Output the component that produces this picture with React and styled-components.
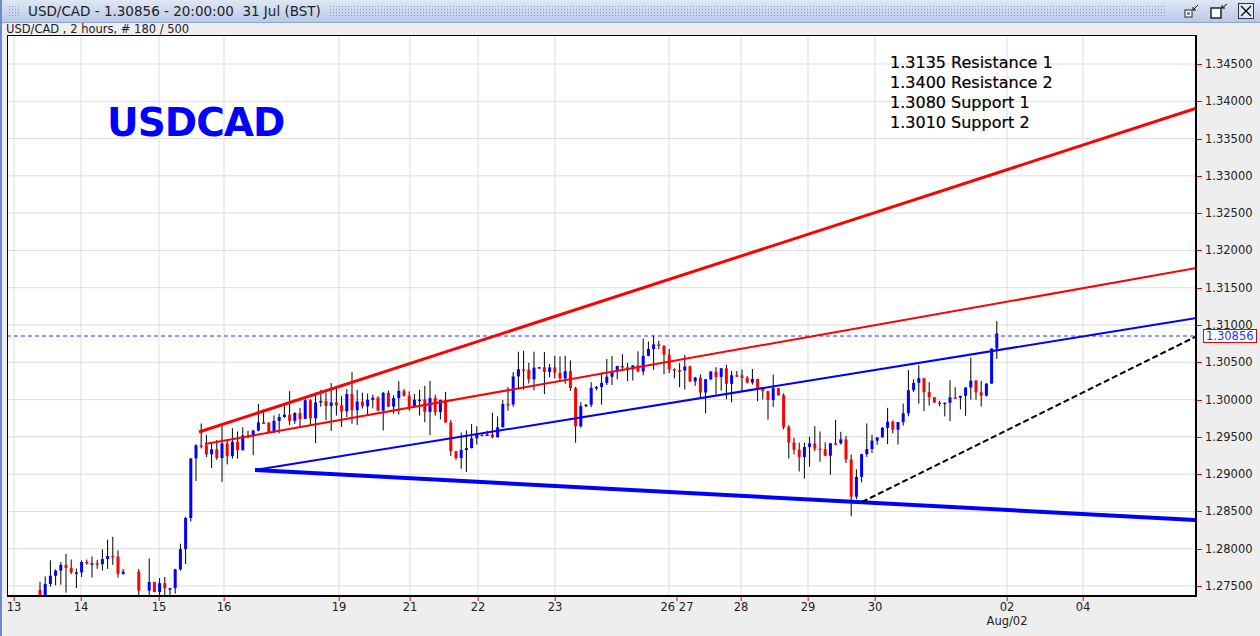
import React from 'react';
import styled, {createGlobalStyle} from 'styled-components';

const Global = createGlobalStyle`
  body { margin: 0; background: #eeeeee; font-family: "DejaVu Sans", sans-serif; }
`;

const PX = 7, PY = 35, PW = 1190, PH = 562;
const yOf = p => 64 + (1.345 - p) * 7457;

const Window = styled.div`
  width: 1260px;
  height: 636px;
  background: #eeeeee;
  border-left: 2px solid #6f8ac6;
  box-sizing: border-box;
  display: flex;
  flex-direction: column;
  overflow: hidden;
`;

const TitleBar = styled.div`
  height: 22px;
  display: flex;
  align-items: center;
  gap: 8px;
  padding: 0 6px 0 6px;
  background: linear-gradient(#dfe7f5, #b9c9e6);
  border-bottom: 1px solid #8ea3cf;
  font-size: 13.5px;
  color: #222;
`;

const Grip = styled.div`
  width: ${p => p.$w || '12px'};
  flex: ${p => p.$grow ? 1 : 'none'};
  height: 12px;
  background-image: radial-gradient(#8a9bbd 0.7px, transparent 0.8px);
  background-size: 3px 3px;
`;

const WinButtons = styled.div`
  display: flex;
  gap: 8px;
  align-items: center;
  margin-left: 10px;
`;

const InfoLine = styled.div`
  height: 12px;
  font-size: 11.5px;
  line-height: 12px;
  padding-left: 4px;
  color: #222;
`;

const ChartRow = styled.div`
  display: flex;
  height: ${PH}px;
  padding-left: 5px;
`;

const Plot = styled.div`
  position: relative;
  width: ${PW}px;
  height: ${PH}px;
  background: #fff;
  border: 1px solid #000;
  border-width: 1px 2px 2px 1px;
  box-sizing: border-box;
`;

const YAxis = styled.div`
  position: relative;
  flex: 1;
`;

const YLabel = styled.div`
  position: absolute;
  left: 8px;
  font-size: 11.5px;
  color: #222;
  transform: translateY(-50%);
  &::before {
    content: "";
    position: absolute;
    left: -8px;
    top: 50%;
    width: 5px;
    border-top: 1px solid #e00;
  }
`;

const PriceTag = styled.div`
  position: absolute;
  left: 6px;
  font-size: 11.5px;
  color: #2233ff;
  border: 1px solid #e00;
  background: #fff;
  padding: 0 2px;
  line-height: 12px;
  transform: translateY(-50%);
`;

const XAxis = styled.div`
  position: relative;
  height: 39px;
`;

const XLabel = styled.div`
  position: absolute;
  top: ${p => p.$row ? 17 : 3}px;
  font-size: 11.5px;
  color: #222;
  transform: translateX(-50%);
  &::before {
    content: "";
    display: ${p => p.$row ? 'none' : 'block'};
    position: absolute;
    left: 50%;
    top: -3px;
    height: 4px;
    border-left: 1px solid #e00;
  }
`;

const Title = styled.div`
  position: absolute;
  left: ${106 - PX}px;
  top: ${99 - PY}px;
  font: bold 39px "DejaVu Sans", sans-serif;
  letter-spacing: -1px;
  color: #0000ff;
`;

const Notes = styled.div`
  position: absolute;
  left: ${889 - PX}px;
  top: ${52 - PY}px;
  font-size: 16px;
  line-height: 20px;
  color: #000;
  -webkit-text-stroke: 0.2px #000;
`;

// price path anchors (x, close)
const anchors = [[40,1.2745],[55,1.2765],[80,1.2775],[100,1.279],[112,1.2792],[122,1.276],[150,1.2745],[175,1.276],[185,1.283],[192,1.294],[205,1.292],[225,1.293],[260,1.296],[300,1.2985],[340,1.2995],[400,1.300],[440,1.299],[452,1.2925],[480,1.295],[500,1.297],[515,1.303],[540,1.3035],[568,1.3035],[575,1.297],[585,1.300],[600,1.303],[640,1.3035],[650,1.307],[660,1.307],[670,1.305],[700,1.3015],[720,1.3035],[760,1.3015],[780,1.300],[790,1.293],[800,1.2925],[830,1.294],[845,1.294],[852,1.2875],[860,1.2935],[880,1.2955],[900,1.298],[915,1.303],[930,1.2995],[950,1.2995],[965,1.3025],[980,1.300],[990,1.304],[995,1.309]];

function interp(x) {
  for (let i = 0; i < anchors.length - 1; i++) {
    const [x0, y0] = anchors[i], [x1, y1] = anchors[i + 1];
    if (x >= x0 && x <= x1) return y0 + (y1 - y0) * (x - x0) / (x1 - x0);
  }
  return anchors[anchors.length - 1][1];
}

let seed = 7;
const rnd = () => { seed = (seed * 16807) % 2147483647; return seed / 2147483647; };

const candles = [];
let prev = 1.2745;
for (let x = 40; x <= 998; x += 5.2) {
  if (x > 122 && x < 150 && rnd() < 0.3) continue;
  const c = interp(x) + (rnd() - 0.5) * 0.0026;
  const o = prev;
  const hi = Math.max(o, c) + rnd() * rnd() * 0.004;
  const lo = Math.min(o, c) - rnd() * rnd() * 0.004;
  candles.push({x, o, c, hi, lo});
  prev = c;
}

const gridX = [14, 81, 159, 224, 339, 410, 478, 555, 669, 741, 808, 875, 1007, 1083];
const xLabels = [[14,'13'],[81,'14'],[159,'15'],[224,'16'],[339,'19'],[410,'21'],[478,'22'],[555,'23'],[677,'26 27'],[741,'28'],[808,'29'],[875,'30'],[1007,'02'],[1083,'04']];
const prices = [];
for (let i = 0; i <= 14; i++) prices.push(1.345 - i * 0.005);

function Chart() {
  return (
    <svg width={PW - 3} height={PH - 3} style={{display: 'block'}}>
      <g transform={`translate(${-PX - 1},${-PY - 1})`}>
        {prices.map(p => <line key={p} x1={PX} x2={1200} y1={yOf(p)} y2={yOf(p)} stroke="#dddddd"/>)}
        {gridX.map(x => <line key={x} x1={x} x2={x} y1={PY} y2={600} stroke="#dddddd"/>)}
        {candles.map((k, i) => {
          const up = k.c >= k.o;
          const top = yOf(Math.max(k.o, k.c)), bot = yOf(Math.min(k.o, k.c));
          return (
            <g key={i}>
              <line x1={k.x} x2={k.x} y1={yOf(k.hi)} y2={yOf(k.lo)} stroke="#000" strokeWidth="1"/>
              <rect x={k.x - 1.5} y={top} width="3" height={Math.max(1.5, bot - top)} fill={up ? '#0000ff' : '#ff0000'}/>
            </g>
          );
        })}
        <line x1={PX} x2={1197} y1={336} y2={336} stroke="#2233ff" strokeDasharray="4 3"/>
        <line x1={199} y1={432} x2={1197} y2={108} stroke="#ff0000" strokeWidth="3"/>
        <line x1={205} y1={444} x2={1197} y2={268} stroke="#ff0000" strokeWidth="2"/>
        <line x1={255} y1={470} x2={1197} y2={318} stroke="#0000ff" strokeWidth="2"/>
        <line x1={255} y1={470} x2={1197} y2={520} stroke="#0000ff" strokeWidth="4"/>
        <line x1={862} y1={502} x2={1197} y2={336} stroke="#000" strokeWidth="2" strokeDasharray="6 3"/>
      </g>
    </svg>
  );
}

export default function App() {
  return (
    <Window>
      <Global/>
      <TitleBar>
        <Grip/>
        <span>USD/CAD - 1.30856 - 20:00:00&nbsp; 31 Jul (BST)</span>
        <Grip $grow/>
        <WinButtons>
          <svg width="18" height="14"><rect x="1" y="6" width="7" height="7" fill="#fff" stroke="#223"/><rect x="3" y="8" width="3" height="3" fill="#6f8ac6"/><path d="M9 6 L14 1 M9 6 h3 M9 6 v-3" stroke="#000"/></svg>
          <svg width="20" height="16"><rect x="1" y="5" width="10" height="10" fill="#fff" stroke="#223" strokeWidth="1.5"/><path d="M12 5 L17 1 M12 5 h3 M12 5 v-3" stroke="#000"/></svg>
          <svg width="16" height="16"><rect x="0.5" y="0.5" width="15" height="15" fill="#dfe7f5" stroke="#334"/><path d="M3 3 L13 13 M13 3 L3 13" stroke="#000" strokeWidth="1.3"/></svg>
        </WinButtons>
      </TitleBar>
      <InfoLine>USD/CAD , 2 hours, # 180 / 500</InfoLine>
      <ChartRow>
        <Plot>
          <Chart/>
          <Title>USDCAD</Title>
          <Notes>
            <div>1.3135 Resistance 1</div>
            <div>1.3400 Resistance 2</div>
            <div>1.3080 Support 1</div>
            <div>1.3010 Support 2</div>
          </Notes>
        </Plot>
        <YAxis>
          {prices.map(p => (
            <YLabel key={p} style={{top: yOf(p) - PY}}>{p.toFixed(5)}</YLabel>
          ))}
          <PriceTag style={{top: 336 - PY}}>1.30856</PriceTag>
        </YAxis>
      </ChartRow>
      <XAxis>
        {xLabels.map(([x, t]) => <XLabel key={t} style={{left: x - 2}}>{t}</XLabel>)}
        <XLabel $row style={{left: 1005}}>Aug/02</XLabel>
      </XAxis>
    </Window>
  );
}
